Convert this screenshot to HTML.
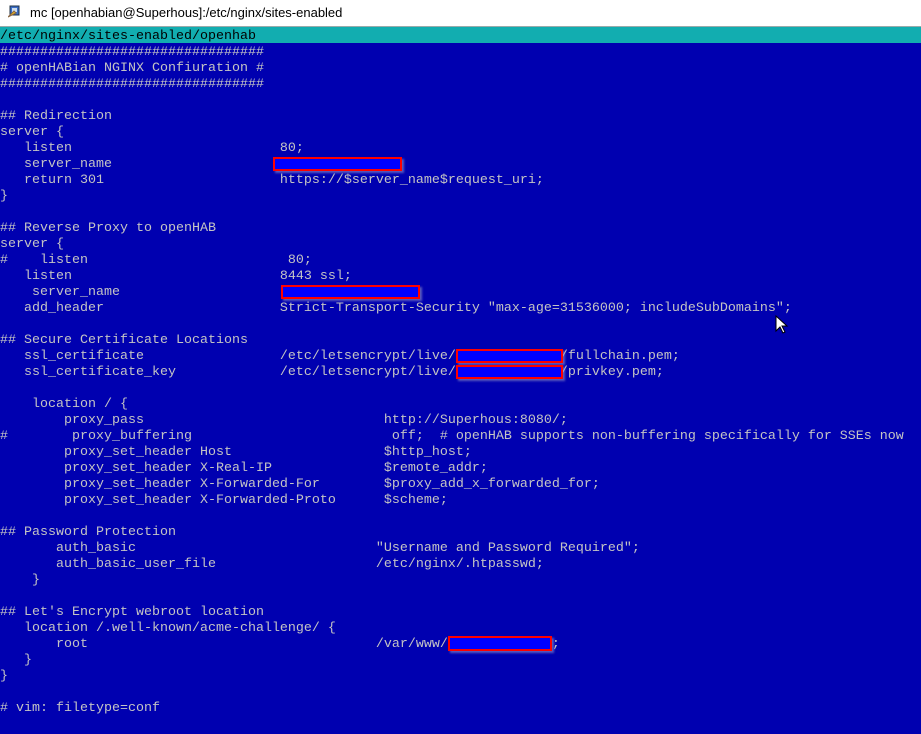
<!DOCTYPE html>
<html><head><meta charset="utf-8"><style>
html,body{margin:0;padding:0;width:921px;height:734px;overflow:hidden;background:#0000b0;}
#title{position:absolute;left:0;top:0;width:921px;height:26px;background:#fff;border-bottom:1px solid #9aa;}
#title span{position:absolute;left:30px;top:5px;font:13px "Liberation Sans",sans-serif;color:#000;}
#ico{position:absolute;left:8px;top:5px;width:13px;height:13px;}
#bar{position:absolute;left:0;top:27px;width:921px;height:16px;background:#12adb0;}
pre{position:absolute;left:0;top:29px;margin:0;font:13.33px/16px "Liberation Mono",monospace;color:#c4c4c4;white-space:pre;}
.hd{color:#000;}
.r{position:absolute;background:#0000ff;border:2px solid #ff0000;box-sizing:border-box;box-shadow:2px 2px 2px rgba(150,150,200,.6);}
</style></head><body>
<div id="title"><svg id="ico" viewBox="0 0 13 13"><rect x="2" y="1" width="9" height="9" fill="#3a6ec9" stroke="#234" stroke-width="1"/><rect x="4" y="3" width="5" height="4" fill="#cde"/><path d="M0 12 L6 6 L8 8 Z" fill="#e8b820" stroke="#864"/></svg><span>mc [openhabian@Superhous]:/etc/nginx/sites-enabled</span></div>
<div id="bar"></div>
<pre><span class="hd">/etc/nginx/sites-enabled/openhab</span>
#################################
# openHABian NGINX Confiuration #
#################################

## Redirection
server {
   listen                          80;
   server_name
   return 301                      https://$server_name$request_uri;
}

## Reverse Proxy to openHAB
server {
#    listen                         80;
   listen                          8443 ssl;
    server_name
   add_header                      Strict-Transport-Security "max-age=31536000; includeSubDomains";

## Secure Certificate Locations
   ssl_certificate                 /etc/letsencrypt/live/             /fullchain.pem;
   ssl_certificate_key             /etc/letsencrypt/live/             /privkey.pem;

    location / {
        proxy_pass                              http://Superhous:8080/;
#        proxy_buffering                         off;  # openHAB supports non-buffering specifically for SSEs now
        proxy_set_header Host                   $http_host;
        proxy_set_header X-Real-IP              $remote_addr;
        proxy_set_header X-Forwarded-For        $proxy_add_x_forwarded_for;
        proxy_set_header X-Forwarded-Proto      $scheme;

## Password Protection
       auth_basic                              "Username and Password Required";
       auth_basic_user_file                    /etc/nginx/.htpasswd;
    }

## Let's Encrypt webroot location
   location /.well-known/acme-challenge/ {
       root                                    /var/www/             ;
   }
}

# vim: filetype=conf</pre>
<div class="r" style="left:273px;top:157px;width:129px;height:14px"></div>
<div class="r" style="left:281px;top:285px;width:139px;height:14px"></div>
<div class="r" style="left:456px;top:349px;width:107px;height:14px"></div>
<div class="r" style="left:456px;top:365px;width:107px;height:14px"></div>
<div class="r" style="left:448px;top:636px;width:104px;height:15px"></div>
<svg style="position:absolute;left:775px;top:315px" width="14" height="20" viewBox="0 0 14 20"><path d="M1 1 L1 16 L5 12 L8 18 L10 17 L7 11 L12 11 Z" fill="#fff" stroke="#000" stroke-width="1"/></svg>
</body></html>
